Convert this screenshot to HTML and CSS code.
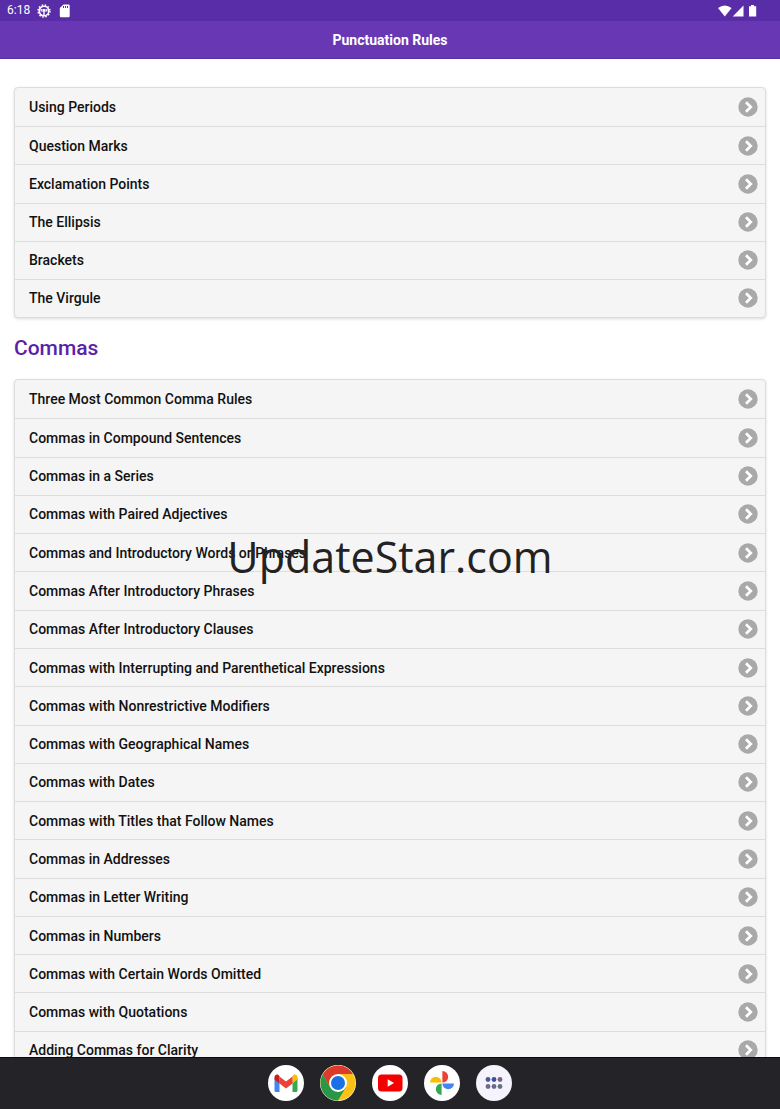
FILE: index.html
```html
<!DOCTYPE html>
<html lang="en">
<head>
<meta charset="utf-8">
<meta name="viewport" content="width=device-width, initial-scale=1">
<title>Punctuation Rules</title>
<link rel="stylesheet" href="styles.css">
</head>
<body>
<svg class="defs" aria-hidden="true">
  <symbol id="go" viewBox="0 0 20 20">
    <circle cx="10" cy="10" r="9.7" fill="#a9a9a9"/>
    <path d="M8 5.2l4.8 4.8L8 14.8" fill="none" stroke="#fff" stroke-width="2.7"/>
  </symbol>
</svg>
<div class="status">
  <span class="clock">6:18</span>
  <svg class="status-icon" viewBox="0 0 14 14" aria-hidden="true">
    <circle cx="7" cy="7" r="4.800" fill="none" stroke="#fff" stroke-width="1.6"/>
    <circle cx="7" cy="7" r="6" fill="none" stroke="#fff" stroke-width="1.400" stroke-dasharray="1.57 1.57"/>
    <path d="M3.600 5h6.800v2.500H3.600z" fill="#fff"/>
    <path d="M7 7v4" stroke="#fff" stroke-width="1.4"/>
    <path d="M4.800 6h1.200M8 6h1.200" stroke="#5a2da8" stroke-width="1"/>
  </svg>
  <svg class="status-icon" viewBox="0 0 14 14" aria-hidden="true">
    <path d="M5.500.5h5a1.200 1.200 0 0 1 1.200 1.200v10.300a1.200 1.200 0 0 1-1.200 1.200H3a1.200 1.200 0 0 1-1.200-1.200V4z" fill="#fff"/>
    <path d="M5.500 2v2M7.500 2v2M9.500 2v2" stroke="#5a2da8" stroke-width="1"/>
  </svg>
  <svg class="signals" viewBox="0 0 40 14" aria-hidden="true" fill="#fff">
    <path d="M0 4q6.800-5 13.600 0L6.800 12.500z"/>
    <path d="M14.700 12.500L25.500 1.500v11z"/>
    <path d="M31 2.200h2V1h3v1.200h2.200v10.300H31z"/>
  </svg>
</div>
<header class="bar"><h1>Punctuation Rules</h1></header>
<main class="content">
  <ul class="list basics">
    <li><a href="#">Using Periods<svg><use href="#go"/></svg></a></li>
    <li><a href="#">Question Marks<svg><use href="#go"/></svg></a></li>
    <li><a href="#">Exclamation Points<svg><use href="#go"/></svg></a></li>
    <li><a href="#">The Ellipsis<svg><use href="#go"/></svg></a></li>
    <li><a href="#">Brackets<svg><use href="#go"/></svg></a></li>
    <li><a href="#">The Virgule<svg><use href="#go"/></svg></a></li>
  </ul>
  <h2>Commas</h2>
  <ul class="list commas">
    <li><a href="#">Three Most Common Comma Rules<svg><use href="#go"/></svg></a></li>
    <li><a href="#">Commas in Compound Sentences<svg><use href="#go"/></svg></a></li>
    <li><a href="#">Commas in a Series<svg><use href="#go"/></svg></a></li>
    <li><a href="#">Commas with Paired Adjectives<svg><use href="#go"/></svg></a></li>
    <li><a href="#">Commas and Introductory Words or Phrases<svg><use href="#go"/></svg></a></li>
    <li><a href="#">Commas After Introductory Phrases<svg><use href="#go"/></svg></a></li>
    <li><a href="#">Commas After Introductory Clauses<svg><use href="#go"/></svg></a></li>
    <li><a href="#">Commas with Interrupting and Parenthetical Expressions<svg><use href="#go"/></svg></a></li>
    <li><a href="#">Commas with Nonrestrictive Modifiers<svg><use href="#go"/></svg></a></li>
    <li><a href="#">Commas with Geographical Names<svg><use href="#go"/></svg></a></li>
    <li><a href="#">Commas with Dates<svg><use href="#go"/></svg></a></li>
    <li><a href="#">Commas with Titles that Follow Names<svg><use href="#go"/></svg></a></li>
    <li><a href="#">Commas in Addresses<svg><use href="#go"/></svg></a></li>
    <li><a href="#">Commas in Letter Writing<svg><use href="#go"/></svg></a></li>
    <li><a href="#">Commas in Numbers<svg><use href="#go"/></svg></a></li>
    <li><a href="#">Commas with Certain Words Omitted<svg><use href="#go"/></svg></a></li>
    <li><a href="#">Commas with Quotations<svg><use href="#go"/></svg></a></li>
    <li><a href="#">Adding Commas for Clarity<svg><use href="#go"/></svg></a></li>
  </ul>
</main>
<nav class="dock">
  <button aria-label="Gmail"><svg viewBox="0 0 36 36">
    <path d="M6.500 13v12.500a1.500 1.500 0 0 0 1.500 1.500h3.500V16z" fill="#4285f4"/>
    <path d="M24.500 16v11H28a1.500 1.500 0 0 0 1.500-1.500V13z" fill="#34a853"/>
    <path d="M24.500 11.500v7l5-4v-2.200c0-2.500-2.500-3.300-4-2.200z" fill="#fbbc04"/>
    <path d="M11.500 18.500v-7l6.500 5 6.500-5v7l-6.500 5z" fill="#ea4335"/>
    <path d="M6.500 12.300v2.200l5 4v-7l-1-1.400c-1.500-1.100-4-.3-4 2.200z" fill="#c5221f"/>
  </svg></button>
  <button aria-label="Chrome"><svg viewBox="0 0 36 36">
    <circle cx="18" cy="18" r="17.500" fill="#fbc116"/>
    <path d="M18 9H33A17.500 17.500 0 0 0 2.800 9.300L10.200 22.500 18 18z" fill="#db3a2c"/>
    <path d="M2.800 9.300A17.500 17.500 0 0 0 18 35.500L25.800 22.500 18 18l-7.800 4.500z" fill="#299648"/>
    <circle cx="18" cy="18" r="9" fill="#fff"/>
    <circle cx="18" cy="18" r="7" fill="#1a70e4"/>
  </svg></button>
  <button aria-label="YouTube"><svg viewBox="0 0 36 36">
    <rect x="6" y="9.500" width="24.500" height="17" rx="3.500" fill="#f40000"/>
    <path d="M15.700 14.300v7.400l6.300-3.700z" fill="#fff"/>
  </svg></button>
  <button aria-label="Photos"><svg viewBox="0 0 36 36">
    <path d="M18.400 17.600V6a5.800 5.800 0 0 1 0 11.600z" fill="#ea4335"/>
    <path d="M18.400 18.400H30a5.800 5.800 0 0 1-11.600 0z" fill="#4285f4"/>
    <path d="M17.600 18.400V30a5.800 5.800 0 0 1 0-11.600z" fill="#34a853"/>
    <path d="M17.600 17.600H6a5.800 5.800 0 0 1 11.600 0z" fill="#fbbc04"/>
  </svg></button>
  <button class="apps" aria-label="All apps"><svg viewBox="0 0 36 36">
    <circle cx="12" cy="14.500" r="2.400" fill="#475a91"/><circle cx="18" cy="14.500" r="2.400" fill="#3c509a"/><circle cx="24" cy="14.500" r="2.400" fill="#7b6189"/>
    <circle cx="12" cy="21.500" r="2.400" fill="#74698c"/><circle cx="18" cy="21.500" r="2.400" fill="#656b8c"/><circle cx="24" cy="21.500" r="2.400" fill="#5d7580"/>
  </svg></button>
</nav>
<div class="watermark">UpdateStar.com</div>
</body>
</html>
```
FILE: styles.css
```css
* { box-sizing: border-box; }
body {
  margin: 0;
  height: 100vh;
  display: flex;
  flex-direction: column;
  overflow: hidden;
  position: relative;
  background: #fff;
  color: #111;
  font-family: Roboto, "Liberation Sans", sans-serif;
}
.defs { position: absolute; width: 0; height: 0; }
.status {
  flex: none;
  display: flex;
  align-items: center;
  gap: 7px;
  height: 21px;
  padding: 0 22px 0 7px;
  background: #5a2da8;
  color: #fff;
}
.clock { font-size: 12px; line-height: 21px; }
.status-icon { width: 14px; height: 14px; }
.signals { width: 40px; height: 14px; margin-left: auto; }
.bar {
  flex: none;
  height: 38px;
  border-bottom: 1px solid #5a2da8;
  background: #6838b4;
  color: #fff;
  text-align: center;
}
.bar h1 { margin: 0; font-size: 14px; line-height: 38px; font-weight: 700; }
.content { flex: 1; min-height: 0; overflow: hidden; padding: 28px 14px 0; }
.list {
  display: grid;
  grid-auto-rows: 1fr;
  margin: 0;
  padding: 0;
  list-style: none;
  background: #f5f5f5;
  border: 1px solid #ddd;
  border-radius: 4px;
  box-shadow: 0 1px 3px rgba(0, 0, 0, 0.15);
}
.basics { min-height: 231px; }
.commas { min-height: 691px; }
.list li + li { border-top: 1px solid #ddd; }
.list a {
  display: flex;
  align-items: center;
  justify-content: space-between;
  height: 100%;
  padding: 0 7px 0 14px;
  color: inherit;
  font-size: 14px;
  line-height: 20px;
  font-weight: 500;
  text-decoration: none;
}
.list svg { width: 20px; height: 20px; }
h2 { margin: 0; color: #5a22a8; font-size: 21px; line-height: 61px; font-weight: 500; }
.dock {
  flex: none;
  display: flex;
  align-items: center;
  justify-content: center;
  gap: 16px;
  height: 52px;
  background: #242428;
  box-shadow: inset 0 1px #0c0c0e;
}
.dock button {
  width: 36px;
  height: 36px;
  padding: 0;
  border: 0;
  border-radius: 50%;
  background: #fff;
}
.dock .apps { background: #f5f3fc; }
.dock svg { display: block; width: 36px; height: 36px; }
.watermark {
  position: absolute;
  inset: 0;
  display: flex;
  align-items: center;
  justify-content: center;
  padding-top: 4px;
  pointer-events: none;
  color: #222;
  font-family: "Open Sans", "Noto Sans", sans-serif;
  font-size: 43px;
  line-height: 60px;
}
```
